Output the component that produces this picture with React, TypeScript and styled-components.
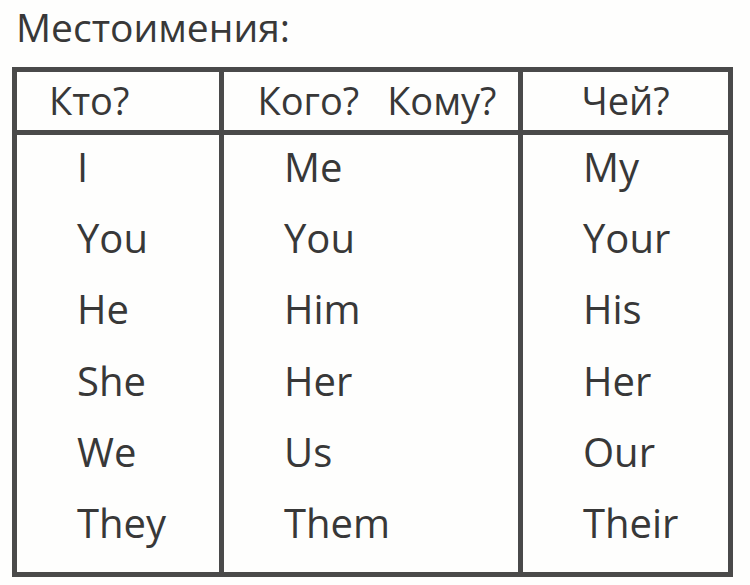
import React from 'react';
import styled, { createGlobalStyle } from 'styled-components';

const GlobalStyle = createGlobalStyle`
    html, body {
        margin    : 0;
        padding   : 0;
        background: #fefefd;
    }
    body {
        font-family: "Open Sans", "DejaVu Sans", sans-serif;
        color      : #383838;
    }
`

const Page = styled.div`
    width         : 750px;
    height        : 585px;
    display       : flex;
    flex-direction: column;
    padding       : 0 0 0 12px;
    box-sizing    : border-box;
    overflow      : hidden;
`

const Title = styled.h1`
    margin     : 0;
    padding    : 0 0 0 4px;
    height     : 67px;
    font-size  : 39px;
    font-weight: 400;
    line-height: 53px;
`

const Table = styled.div`
    display              : grid;
    grid-template-columns: 202px 294px 205px;
    grid-template-rows   : 58px 437px;
    gap                  : 5px;
    padding              : 5px;
    width                : 721px;
    box-sizing           : border-box;
    background           : #4a4a4a;
`

const HeadCell = styled.div<{ $pad: number; $center?: boolean }>`
    background     : #fefefd;
    display        : flex;
    align-items    : center;
    justify-content: ${p => (p.$center ? 'center' : 'flex-start')};
    gap            : 28px;
    padding-left   : ${p => p.$pad}px;
    font-size      : 38px;
    line-height    : 1;
    padding-bottom : 2px;
`

const Word = styled.div`
    font-size  : 40px;
    line-height: 71.2px;
`

const BodyCell = styled.div`
    background    : #fefefd;
    display       : flex;
    flex-direction: column;
    padding       : 0 0 0 60px;

    ${Word}:first-child {
        margin-top: -4px;
    }
`

const columns = [
    ['I', 'You', 'He', 'She', 'We', 'They'],
    ['Me', 'You', 'Him', 'Her', 'Us', 'Them'],
    ['My', 'Your', 'His', 'Her', 'Our', 'Their'],
];

const App = () => {
    return (
        <Page>
            <GlobalStyle />
            <Title>Местоимения:</Title>
            <Table>
                <HeadCell $pad={32}>Кто?</HeadCell>
                <HeadCell $pad={12} $center>
                    <span>Кого?</span>
                    <span>Кому?</span>
                </HeadCell>
                <HeadCell $pad={0} $center>Чей?</HeadCell>

                {columns.map((words, i) => (
                    <BodyCell key={i}>
                        {words.map((w, j) => <Word key={j}>{w}</Word>)}
                    </BodyCell>
                ))}
            </Table>
        </Page>
    )
}

export default App;
